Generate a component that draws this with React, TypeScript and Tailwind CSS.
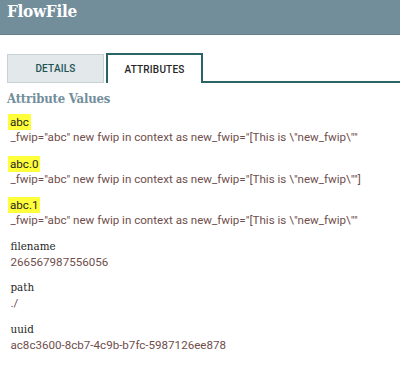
import React from 'react';

const attributes: { name: string; value: string; highlight?: boolean }[] = [
  { name: 'abc', value: '_fwip="abc" new fwip in context as new_fwip="[This is \\"new_fwip\\""', highlight: true },
  { name: 'abc.0', value: '_fwip="abc" new fwip in context as new_fwip="[This is \\"new_fwip\\""]', highlight: true },
  { name: 'abc.1', value: '_fwip="abc" new fwip in context as new_fwip="[This is \\"new_fwip\\""', highlight: true },
  { name: 'filename', value: '266567987556056' },
  { name: 'path', value: './' },
  { name: 'uuid', value: 'ac8c3600-8cb7-4c9b-b7fc-5987126ee878' },
];

export default function App() {
  return (
    <div className="w-[400px] h-[371px] bg-white overflow-hidden">
      {/* Header */}
      <div className="h-[35px] bg-[#728e9b] border-b border-[#66808c] px-[7px] pt-[1px]">
        <h1 className="text-white font-bold text-[17px] leading-[20px] tracking-[-0.3px] font-['DejaVu_Serif_Condensed','Liberation_Serif',serif]">
          FlowFile
        </h1>
      </div>

      {/* Tabs */}
      <div className="mt-[18px] flex items-end pl-[7px] font-['Roboto',sans-serif]">
        <div className="w-[97px] h-[29px] bg-[#e3e8eb] border border-[#c8d2d6] flex items-center justify-center text-[10px] font-medium text-[#1f5456] tracking-[0.2px]">
          DETAILS
        </div>
        <div className="ml-[2px] w-[97px] h-[30px] border-t-2 border-x-2 border-[#2c6466] flex items-center justify-center text-[10px] font-medium text-[#262626] tracking-[0.2px]">
          ATTRIBUTES
        </div>
        <div className="flex-1 border-b-2 border-[#2c6466]" />
      </div>

      {/* Attribute values */}
      <div className="px-[7px] pt-[7px]">
        <h2 className="text-[#728e9b] font-bold text-[13px] leading-[18px] tracking-[-0.2px] font-['DejaVu_Serif_Condensed','Liberation_Serif',serif]">
          Attribute Values
        </h2>
        <div className="mt-[6px] pl-[3.5px] flex flex-col gap-[10.5px]">
          {attributes.map((a) => (
            <div key={a.name} className="flex flex-col">
              <div className="h-[16px] flex items-start">
                {a.highlight ? (
                  <span className="inline-block bg-[#ffff3a] px-[2px] -ml-[2.5px] text-[11.6px] leading-[16px] text-[#262626] font-['Roboto',sans-serif]">
                    {a.name}
                  </span>
                ) : (
                  <span className="text-[11.5px] leading-[14px] text-[#262626] font-['DejaVu_Serif_Condensed','Liberation_Serif',serif]">
                    {a.name}
                  </span>
                )}
              </div>
              <div className="text-[11.6px] leading-[15px] text-[#6f4e4c] font-['Roboto',sans-serif] whitespace-nowrap">
                {a.value}
              </div>
            </div>
          ))}
        </div>
      </div>
    </div>
  );
}
